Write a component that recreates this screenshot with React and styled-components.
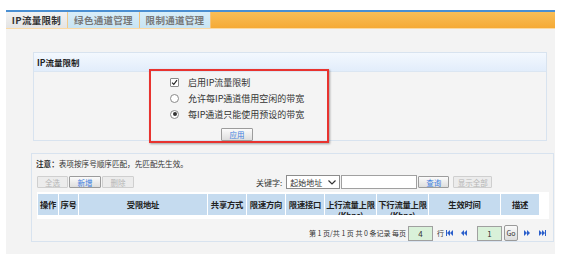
import React from 'react';
import styled, { createGlobalStyle } from 'styled-components';

// styles globaux : page blanche, police CJK
const GlobalStyle = createGlobalStyle`
  body {
    margin: 0;
    background: #ffffff;
    font-family: "Noto Sans CJK SC", "DejaVu Sans", sans-serif;
    color: #333;
  }
`;

const Page = styled.div`
  width: 549px;
  margin: 10px 0 0 6px;
`;

/* barre d'onglets */
const TabBar = styled.div`
  display: flex;
  height: 16px;
  border-top: 2px solid #4a8fd2;
  border-bottom: 1px solid #fbd9a3;
  background: linear-gradient(#f9be57, #f5aa36);
`;

const Tab = styled.div`
  width: ${p => p.$w}px;
  display: flex;
  align-items: center;
  justify-content: center;
  font-size: 9.5px;
  font-weight: bold;
  letter-spacing: 0.3px;
  color: ${p => (p.$active ? '#333' : '#777')};
  background: ${p => (p.$active ? 'linear-gradient(#f2f2f2, #e4e4e4)' : 'linear-gradient(#d8eef9, #c8e4f3)')};
  border-right: 1px solid ${p => (p.$active ? '#f0c98a' : '#f3c37a')};
  box-sizing: border-box;
`;

const Content = styled.div`
  background: #f3f3f3;
  padding: 23px 1px 2px 27px;
  min-height: 200px;
`;

/* panneaux */
const Panel = styled.div`
  width: ${p => p.$w}px;
  margin-left: ${p => p.$ml || 0}px;
  margin-top: ${p => p.$mt || 0}px;
  border: 1px solid #d8e3ef;
  box-sizing: border-box;
  background: #f4f4f4;
`;

const PanelHead = styled.div`
  height: 18px;
  display: flex;
  align-items: center;
  padding-left: 3px;
  font-size: 8.5px;
  font-weight: bold;
  color: #222;
  background: linear-gradient(#f3f8fe, #e2edfb);
  border-bottom: 1px solid #dbe6f2;
`;

const PanelBody = styled.div`
  height: 71px;
  padding-left: 115px;
`;

const RedBox = styled.div`
  width: 180px;
  height: 74px;
  margin-top: -3px;
  box-sizing: border-box;
  border: 2px solid #e8332f;
  box-shadow: 1px 1px 2px rgba(0, 0, 0, 0.35);
  padding: 3px 0 0 19px;
  display: flex;
  flex-direction: column;
`;

const OptRow = styled.div`
  flex: 0 0 16px;
  height: 16px;
  display: flex;
  align-items: center;
  gap: 9px;
  font-size: 9px;
  color: #333;
`;

const Box = styled.span`
  width: 9px;
  height: 9px;
  box-sizing: border-box;
  border: 1px solid #8a8a8a;
  background: #fff;
  border-radius: ${p => (p.$round ? '50%' : '1px')};
  display: flex;
  align-items: center;
  justify-content: center;
`;

const Dot = styled.span`
  width: 4px;
  height: 4px;
  border-radius: 50%;
  background: #333;
`;

const Btn = styled.button`
  height: ${p => p.$h || 13}px;
  width: ${p => p.$w}px;
  padding: 0;
  font-family: inherit;
  font-size: 7.5px;
  color: ${p => (p.$off ? '#b5b5b5' : '#3d7fe0')};
  border: 1px solid ${p => (p.$off ? '#cfcfcf' : '#9c9c9c')};
  background: ${p => (p.$off ? '#ececec' : 'linear-gradient(#fbfbfb, #dedede)')};
  border-radius: 1px;
  flex-shrink: 0;
`;

const ApplyWrap = styled.div`
  display: flex;
  margin: 6px 0 0 51px;
  flex-shrink: 0;
`;

const Note = styled.div`
  padding: 4px 0 0 4px;
  font-size: 7.6px;
  line-height: 11px;
  color: #333;
  b { font-weight: bold; }
`;

const Toolbar = styled.div`
  display: flex;
  align-items: center;
  gap: 1px;
  margin: 6px 0 0 5px;
  height: 14px;
`;

const Keyword = styled.span`
  margin-left: 121px;
  font-size: 8px;
  color: #333;
  margin-right: 3px;
`;

const Select = styled.div`
  width: 54px;
  height: 14px;
  box-sizing: border-box;
  border: 1px solid #8c8c8c;
  background: #fff;
  font-size: 8px;
  display: flex;
  align-items: center;
  justify-content: space-between;
  padding: 0 3px;
  color: #333;
`;

const Input = styled.div`
  width: ${p => p.$w}px;
  height: ${p => p.$h || 14}px;
  box-sizing: border-box;
  border: 1px solid #a0a0a0;
  background: ${p => p.$bg || '#fff'};
  font-size: 8px;
  display: flex;
  align-items: center;
  justify-content: center;
  color: #333;
`;

const TableWrap = styled.div`
  margin: 3px 0 0 5px;
  width: 512px;
  background: #fff;
  padding: 2px 0 4px 1px;
  box-sizing: border-box;
`;

const HeadRow = styled.div`
  display: grid;
  grid-template-columns: 20px 19px 128px 38px 38px 38px 51px 51px 71px 38px;
  gap: 1px;
  width: 500px;
`;

// l'en-tête a une hauteur fixe : la 2e ligne "(Kbps)" est coupée comme dans l'original
const HeadCell = styled.div`
  height: 21px;
  overflow: hidden;
  background: #c5dbef;
  text-align: center;
  font-size: 8.3px;
  font-weight: bold;
  line-height: 11px;
  padding-top: 5px;
  box-sizing: border-box;
  color: #222;
  letter-spacing: -0.2px;
`;

const Pager = styled.div`
  display: flex;
  align-items: center;
  justify-content: flex-end;
  gap: 2px;
  margin: 6px 7px 0 0;
  font-size: 7px;
  color: #333;
`;

const GoBtn = styled.div`
  width: 14px;
  height: 16px;
  box-sizing: border-box;
  border: 1px solid #9a9a9a;
  background: linear-gradient(#fafafa, #dcdcdc);
  font-size: 7px;
  display: flex;
  align-items: center;
  justify-content: center;
  color: #333;
  border-radius: 2px;
`;

const NavIcon = ({ dir, bar }) => (
  <svg width="7" height="6" viewBox="0 0 7 6">
    <g fill="#2b5fcb" transform={dir === 'left' ? 'translate(7,0) scale(-1,1)' : undefined}>
      <polygon points="0,0 3,3 0,6" />
      <polygon points="3,0 6,3 3,6" />
      {bar && <rect x="6" y="0" width="1" height="6" />}
    </g>
  </svg>
);

const cols = ['操作', '序号', '受限地址', '共享方式', '限速方向', '限速接口', '上行流量上限(Kbps)', '下行流量上限(Kbps)', '生效时间', '描述'];

export default function App() {
  return (
    <Page>
      <GlobalStyle />
      <TabBar>
        <Tab $w={62} $active>IP流量限制</Tab>
        <Tab $w={72}>绿色通道管理</Tab>
        <Tab $w={71}>限制通道管理</Tab>
      </TabBar>
      <Content>
        <Panel $w={514}>
          <PanelHead>IP流量限制</PanelHead>
          <PanelBody>
            <RedBox>
              <OptRow>
                <Box>
                  <svg width="7" height="7" viewBox="0 0 7 7">
                    <path d="M1 3.6 L2.8 5.4 L6 1.2" stroke="#222" strokeWidth="1.1" fill="none" />
                  </svg>
                </Box>
                启用IP流量限制
              </OptRow>
              <OptRow>
                <Box $round />
                允许每IP通道借用空闲的带宽
              </OptRow>
              <OptRow>
                <Box $round><Dot /></Box>
                每IP通道只能使用预设的带宽
              </OptRow>
              <ApplyWrap>
                <Btn $w={32}>应用</Btn>
              </ApplyWrap>
            </RedBox>
          </PanelBody>
        </Panel>

        <Panel $w={523} $ml={-2} $mt={12}>
          <Note><b>注意：</b>表项按序号顺序匹配，先匹配先生效。</Note>
          <Toolbar>
            <Btn $w={31} $h={12} $off>全选</Btn>
            <Btn $w={32} $h={12}>新增</Btn>
            <Btn $w={32} $h={12} $off>删除</Btn>
            <Keyword>关键字:</Keyword>
            <Select>
              起始地址
              <svg width="8" height="5" viewBox="0 0 8 5">
                <path d="M0.5 0.5 L4 4 L7.5 0.5" stroke="#333" strokeWidth="1.2" fill="none" />
              </svg>
            </Select>
            <Input $w={76} />
            <Btn $w={31} $h={12}>查询</Btn>
            <Btn $w={39} $h={12} $off style={{ marginLeft: 3 }}>显示全部</Btn>
          </Toolbar>
          <TableWrap>
            <HeadRow>
              {cols.map(c => <HeadCell key={c}>{c}</HeadCell>)}
            </HeadRow>
          </TableWrap>
          <Pager>
            <span>第 1 页/共 1 页 共 0 条记录 每页</span>
            <Input $w={25} $h={15} $bg="#d9f1d9">4</Input>
            <span style={{ marginLeft: 2 }}>行</span>
            <NavIcon dir="left" bar />
            <span style={{ width: 3 }} />
            <NavIcon dir="left" />
            <span style={{ width: 6 }} />
            <Input $w={25} $h={15} $bg="#d9f1d9">1</Input>
            <GoBtn>Go</GoBtn>
            <span style={{ width: 2 }} />
            <NavIcon dir="right" />
            <span style={{ width: 4 }} />
            <NavIcon dir="right" bar />
          </Pager>
        </Panel>
      </Content>
    </Page>
  );
}
